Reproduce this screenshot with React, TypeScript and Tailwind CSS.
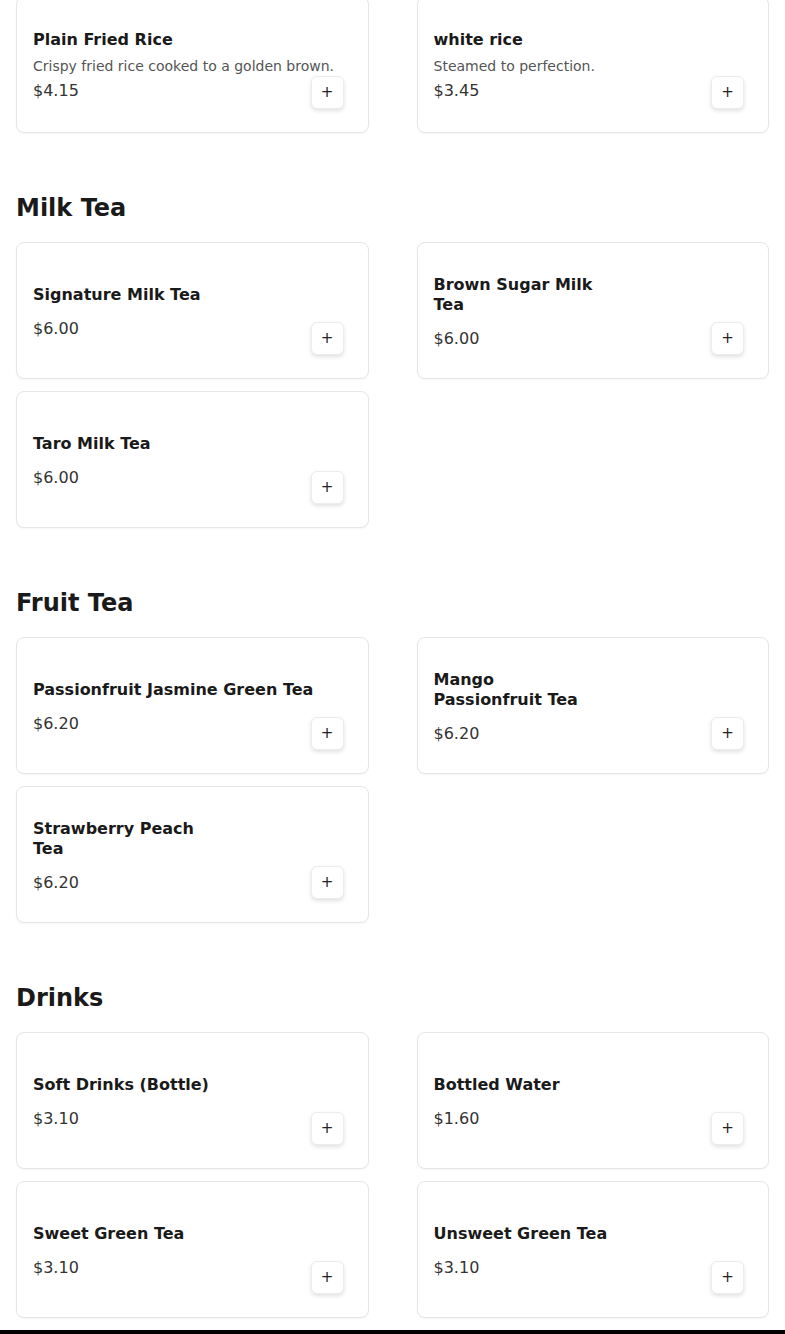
import React from 'react';

type Item = { name: string[]; price: string; desc?: string };
type Section = { title?: string; items: Item[] };

// menu data, names split where the original wraps
const sections: Section[] = [
  {
    items: [
      { name: ['Plain Fried Rice'], desc: 'Crispy fried rice cooked to a golden brown.', price: '$4.15' },
      { name: ['white rice'], desc: 'Steamed to perfection.', price: '$3.45' },
    ],
  },
  {
    title: 'Milk Tea',
    items: [
      { name: ['Signature Milk Tea'], price: '$6.00' },
      { name: ['Brown Sugar Milk', 'Tea'], price: '$6.00' },
      { name: ['Taro Milk Tea'], price: '$6.00' },
    ],
  },
  {
    title: 'Fruit Tea',
    items: [
      { name: ['Passionfruit Jasmine Green Tea'], price: '$6.20' },
      { name: ['Mango', 'Passionfruit Tea'], price: '$6.20' },
      { name: ['Strawberry Peach', 'Tea'], price: '$6.20' },
    ],
  },
  {
    title: 'Drinks',
    items: [
      { name: ['Soft Drinks (Bottle)'], price: '$3.10' },
      { name: ['Bottled Water'], price: '$1.60' },
      { name: ['Sweet Green Tea'], price: '$3.10' },
      { name: ['Unsweet Green Tea'], price: '$3.10' },
    ],
  },
];

function MenuCard({ item }: { item: Item }) {
  return (
    <div className="h-[137px] bg-white border border-[#e6e6e6] rounded-lg shadow-[0_1px_2px_rgba(0,0,0,0.04)] flex items-center justify-between pl-4 pr-6 pt-1">
      <div className="flex flex-col flex-1 min-w-0 whitespace-nowrap">
        <h3 className="text-base font-bold leading-5 text-[#1a1a1a]">
          {item.name.map((line, i) => (
            <React.Fragment key={i}>
              {i > 0 && <br />}
              {line}
            </React.Fragment>
          ))}
        </h3>
        {item.desc ? (
          <>
            <p className="mt-1.5 text-sm leading-5 text-[#555]">{item.desc}</p>
            <p className="mt-[3px] text-base leading-6 text-[#333]">{item.price}</p>
          </>
        ) : (
          <p className="mt-3 text-base leading-6 text-[#333]">{item.price}</p>
        )}
      </div>
      <button
        className="shrink-0 self-end mb-[23px] w-[33px] h-[33px] flex items-center justify-center bg-white border border-[#ececec] rounded-md shadow-[0_2px_4px_rgba(0,0,0,0.12)] text-[#222] text-[15px] leading-none"
        aria-label="Add"
      >
        +
      </button>
    </div>
  );
}

export default function App() {
  return (
    <div className="h-[1334px] overflow-hidden bg-white font-['DejaVu_Sans',sans-serif]">
      <div className="-mt-[4px] px-4 flex flex-col">
        {sections.map((section, si) => (
          <section key={si} className={si > 0 ? 'mt-[59px]' : ''}>
            {section.title && (
              <h2 className="text-2xl font-bold leading-8 text-[#1a1a1a] mb-[18px]">{section.title}</h2>
            )}
            <div className="grid grid-cols-2 gap-x-12 gap-y-3">
              {section.items.map((item, i) => (
                <MenuCard key={i} item={item} />
              ))}
            </div>
          </section>
        ))}
      </div>
      <div className="fixed bottom-0 left-0 right-0 h-1 bg-black" />
    </div>
  );
}
